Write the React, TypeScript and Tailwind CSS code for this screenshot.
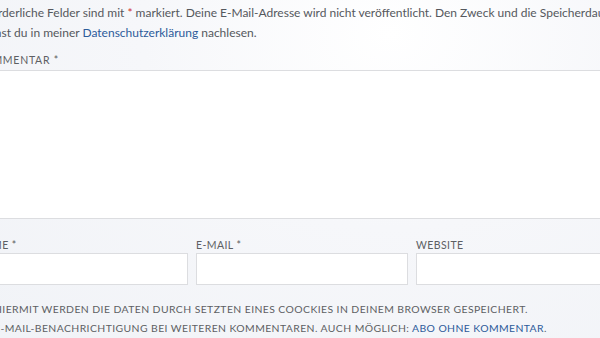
const font = { fontFamily: "Lato, 'Noto Sans', sans-serif" };

function Label({ children, className = "" }: { children: React.ReactNode; className?: string }) {
  return (
    <label
      className={`block text-[10.5px] uppercase tracking-[0.04em] text-[#5d5f63] leading-[11px] ${className}`}
    >
      {children}
    </label>
  );
}

function Field({ label }: { label: React.ReactNode }) {
  return (
    <div className="flex flex-col">
      <Label className="mb-[2px]">{label}</Label>
      <input className="h-[32px] w-full border border-[#dcdde0] bg-white outline-none" />
    </div>
  );
}

function CheckRow({ children }: { children: React.ReactNode }) {
  return (
    <div className="flex items-center gap-[6px] h-[19px]">
      <input type="checkbox" className="w-[12px] h-[12px] shrink-0" />
      <span className="text-[10.4px] uppercase tracking-[0.04em] text-[#5d5f63] whitespace-nowrap">
        {children}
      </span>
    </div>
  );
}

export default function App() {
  return (
    <div
      className="w-[600px] h-[338px] overflow-hidden bg-[radial-gradient(ellipse_at_65%_10%,#ffffff_0%,#f6f7fa_45%,#f1f3f7_100%)]"
      style={font}
    >
      <div className="-ml-[24px] w-[652px]">
        <p className="w-[660px] pt-[3px] text-[12px] leading-[20px] text-[#55585d]">
          Erforderliche Felder sind mit <span className="text-[#d0312d]">*</span> markiert. Deine
          E-Mail-Adresse wird nicht veröffentlicht. Den Zweck und die Speicherdauer kannst du in
          meiner <a className="text-[#2d5b9a]">Datenschutzerklärung</a> nachlesen.
        </p>

        <div className="mt-[12px]">
          <Label className="mb-[4px] tracking-[0.07em]">Kommentar *</Label>
          <textarea className="block w-full h-[149px] border border-[#dcdde0] bg-white outline-none resize-none" />
        </div>

        <div className="mt-[21px] grid grid-cols-3 gap-[8px]">
          <Field label="Name *" />
          <Field label="E-Mail *" />
          <Field label="Website" />
        </div>

        <div className="mt-[15px] flex flex-col">
          <CheckRow>
            Hiermit werden die Daten durch Setzten eines Coockies in deinem Browser gespeichert.
          </CheckRow>
          <CheckRow>
            E-Mail-Benachrichtigung bei weiteren Kommentaren. Auch möglich:{" "}
            <a className="text-[#2d5b9a]">Abo ohne Kommentar</a>.
          </CheckRow>
        </div>
      </div>
    </div>
  );
}
